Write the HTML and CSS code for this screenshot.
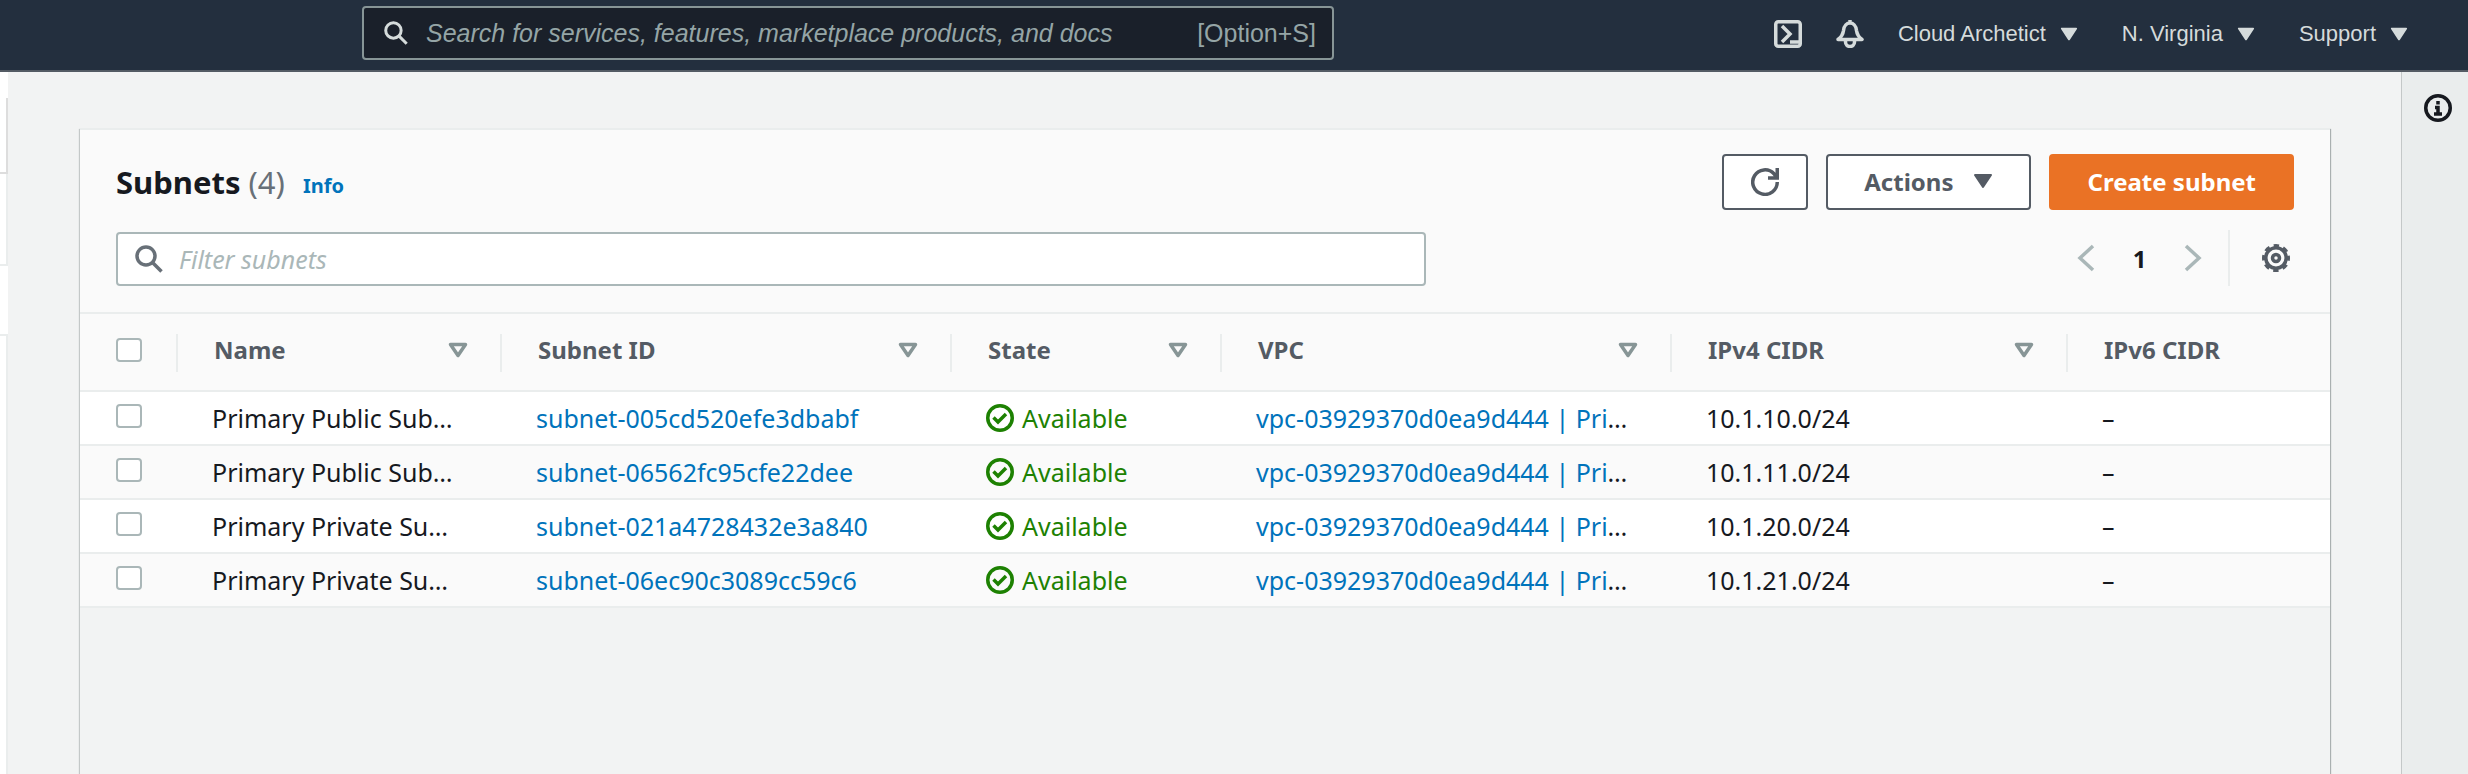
FILE: index.html
```html
<!DOCTYPE html>
<html lang="en">
<head>
<meta charset="utf-8">
<title>Subnets</title>
<link rel="stylesheet" href="styles.css">
</head>
<body>
<svg class="sprite" aria-hidden="true">
  <symbol id="search" viewBox="0 0 28 28"><circle cx="11" cy="11" r="9"/><path d="M17 17l9.500 9.500"/></symbol>
  <symbol id="down" viewBox="0 0 20 16"><path d="M2 2h16L10 14z" fill="currentColor" stroke-width="2" stroke-linejoin="round"/></symbol>
  <symbol id="sort" viewBox="0 0 20 16"><path d="M2.500 2.500h15L10 13.500z" stroke-linejoin="round"/></symbol>
  <symbol id="ok" viewBox="0 0 28 28"><circle cx="14" cy="14" r="12.250"/><path d="M7.500 13.500l4.500 4.500 8-8"/></symbol>
</svg>

<header class="topbar">
  <label class="global-search">
    <svg class="icon global-search-icon"><use href="#search"/></svg>
    <input type="search" aria-label="Search" placeholder="Search for services, features, marketplace products, and docs">
    <span class="shortcut">[Option+S]</span>
  </label>
  <nav class="topnav">
    <button class="nav-icon" aria-label="CloudShell">
      <svg class="icon" viewBox="0 0 28 28"><rect x="1.750" y="1.750" width="24.500" height="24.500" rx="2.500"/><path d="M8 6l8 8-8 8M16 22h9"/></svg>
    </button>
    <button class="nav-icon" aria-label="Notifications">
      <svg class="icon" viewBox="0 0 28 28"><path d="M14 0v3M2 19.500c4-3 5-5 5.500-9C8 5.500 11 3 14 3s6 2.500 6.500 7.500c.500 4 1.500 6 5.500 9zM9.500 20v2a4.500 4.500 0 0 0 9 0v-2" stroke-linejoin="round"/></svg>
    </button>
    <button class="nav-menu">Cloud Archetict<svg class="nav-caret"><use href="#down"/></svg></button>
    <button class="nav-menu">N. Virginia<svg class="nav-caret"><use href="#down"/></svg></button>
    <button class="nav-menu">Support<svg class="nav-caret"><use href="#down"/></svg></button>
  </nav>
</header>

<div class="shell">
  <aside class="side-edge">
    <div class="edge edge-top"></div>
    <div class="edge edge-tab"></div>
    <div class="edge edge-group"></div>
    <div class="edge edge-plain"></div>
    <div class="edge edge-rest"></div>
  </aside>

  <main class="content">
    <section class="panel">
      <div class="panel-head">
        <div class="title-row">
          <h1>Subnets <span class="count">(4)</span></h1>
          <a class="info" href="#">Info</a>
          <div class="actions">
            <button class="btn btn-refresh" aria-label="Refresh">
              <svg class="icon" viewBox="0 0 28 28"><path d="M26.250 14A12.250 12.250 0 1 1 23 5.800l2.500 3M26.250 0v10H17"/></svg>
            </button>
            <button class="btn">Actions<svg class="caret"><use href="#down"/></svg></button>
            <button class="btn btn-primary">Create subnet</button>
          </div>
        </div>
        <div class="filter-row">
          <label class="filter">
            <svg class="icon filter-icon"><use href="#search"/></svg>
            <input type="text" aria-label="Filter subnets" placeholder="Filter subnets">
          </label>
          <div class="pager">
            <button class="page-step" aria-label="Previous page"><svg class="chevron" viewBox="0 0 18 28"><path d="M16 2L3 14l13 12"/></svg></button>
            <button class="page-number">1</button>
            <button class="page-step" aria-label="Next page"><svg class="chevron" viewBox="0 0 18 28"><path d="M2 2l13 12L2 26"/></svg></button>
            <button class="settings" aria-label="Preferences">
              <svg class="icon" viewBox="0 0 28 28"><circle cx="14" cy="14" r="10.200"/><circle cx="14" cy="14" r="12.500" stroke-width="3" stroke-dasharray="5.400 4.417" stroke-dashoffset="2.700"/><circle cx="14" cy="14" r="3.500"/></svg>
            </button>
          </div>
        </div>
      </div>

      <table class="subnets">
        <colgroup><col class="c-check"><col class="c-name"><col class="c-wide"><col class="c-state"><col class="c-wide"><col class="c-cidr"><col></colgroup>
        <thead>
          <tr>
            <th><input type="checkbox" aria-label="Select all"></th>
            <th><div class="th">Name<svg class="sort"><use href="#sort"/></svg></div></th>
            <th><div class="th">Subnet ID<svg class="sort"><use href="#sort"/></svg></div></th>
            <th><div class="th">State<svg class="sort"><use href="#sort"/></svg></div></th>
            <th><div class="th">VPC<svg class="sort"><use href="#sort"/></svg></div></th>
            <th><div class="th">IPv4 CIDR<svg class="sort"><use href="#sort"/></svg></div></th>
            <th><div class="th">IPv6 CIDR</div></th>
          </tr>
        </thead>
        <tbody>
          <tr>
            <td><input type="checkbox" aria-label="Select subnet-005cd520efe3dbabf"></td>
            <td>Primary Public Sub…</td>
            <td><a href="#">subnet-005cd520efe3dbabf</a></td>
            <td><span class="state"><svg class="icon"><use href="#ok"/></svg>Available</span></td>
            <td><a href="#">vpc-03929370d0ea9d444 | Pri</a>…</td>
            <td>10.1.10.0/24</td>
            <td>–</td>
          </tr>
          <tr>
            <td><input type="checkbox" aria-label="Select subnet-06562fc95cfe22dee"></td>
            <td>Primary Public Sub…</td>
            <td><a href="#">subnet-06562fc95cfe22dee</a></td>
            <td><span class="state"><svg class="icon"><use href="#ok"/></svg>Available</span></td>
            <td><a href="#">vpc-03929370d0ea9d444 | Pri</a>…</td>
            <td>10.1.11.0/24</td>
            <td>–</td>
          </tr>
          <tr>
            <td><input type="checkbox" aria-label="Select subnet-021a4728432e3a840"></td>
            <td>Primary Private Su…</td>
            <td><a href="#">subnet-021a4728432e3a840</a></td>
            <td><span class="state"><svg class="icon"><use href="#ok"/></svg>Available</span></td>
            <td><a href="#">vpc-03929370d0ea9d444 | Pri</a>…</td>
            <td>10.1.20.0/24</td>
            <td>–</td>
          </tr>
          <tr>
            <td><input type="checkbox" aria-label="Select subnet-06ec90c3089cc59c6"></td>
            <td>Primary Private Su…</td>
            <td><a href="#">subnet-06ec90c3089cc59c6</a></td>
            <td><span class="state"><svg class="icon"><use href="#ok"/></svg>Available</span></td>
            <td><a href="#">vpc-03929370d0ea9d444 | Pri</a>…</td>
            <td>10.1.21.0/24</td>
            <td>–</td>
          </tr>
        </tbody>
      </table>
    </section>
  </main>

  <aside class="help-bar">
    <button class="help" aria-label="Open help panel">
      <svg class="icon" viewBox="0 0 28 28"><circle cx="14" cy="14" r="12.250"/><path d="M14 7v3.500M11 13.500h3v6M10 20h8"/></svg>
    </button>
  </aside>
</div>
</body>
</html>
```
FILE: styles.css
```css
* { box-sizing: border-box; }

body {
  margin: 0;
  min-height: 100vh;
  display: flex;
  flex-direction: column;
  background: #f2f3f3;
  color: #16191f;
  font-family: "Noto Sans", "Open Sans", sans-serif;
  font-size: 25px;
}

button, input { font: inherit; color: inherit; }
button { border: 0; padding: 0; background: none; display: flex; align-items: center; }
a { color: #0073bb; text-decoration: none; }

.sprite { display: none; }
svg { fill: none; stroke: currentColor; stroke-width: 3.5; display: block; }
.icon { width: 28px; height: 28px; flex: none; }

/* Top bar */
.topbar {
  display: flex;
  align-items: center;
  height: 72px;
  padding: 0 60px 4px 362px;
  background: #232f3e;
  border-bottom: 2px solid #545b64;
  font-family: "Liberation Sans", Arial, sans-serif;
}
.global-search {
  display: flex;
  align-items: center;
  flex: 0 1 972px;
  height: 54px;
  padding: 0 16px 0 20px;
  background: #1a202a;
  border: 2px solid #879596;
  border-radius: 4px;
  color: #95a5a6;
  font-size: 25px;
}
.global-search input {
  flex: 1;
  min-width: 0;
  padding: 0;
  border: 0;
  outline: 0;
  background: none;
}
.global-search input::placeholder { color: #95a5a6; font-style: italic; opacity: 1; }
.global-search-icon { width: 24px; height: 24px; margin-right: 18px; color: #d5dbdb; }
.topnav { display: flex; align-items: center; margin-left: auto; padding-top: 2px; color: #d5dbdb; font-size: 22px; }
.nav-icon { margin-right: 34px; }
.nav-menu { margin-right: 44px; }
.nav-menu:last-child { margin-right: 0; }
.nav-caret { width: 18px; height: 16px; margin-left: 14px; }

/* Page frame */
.shell { flex: 1; display: flex; }
.side-edge { width: 8px; display: flex; flex-direction: column; background: #fff; }
.edge { border: 0 solid #eaeded; }
.edge-top { height: 26px; }
.edge-tab { height: 76px; border-width: 0 2px 2px 0; border-color: #ddd; }
.edge-group { height: 92px; border-width: 0 2px 2px 0; }
.edge-plain { height: 70px; border-bottom-width: 2px; }
.edge-rest { flex: 1; border-right-width: 2px; }
.content { flex: 1; min-width: 0; display: flex; padding: 56px 71px 0 72px; }
.help-bar { width: 67px; padding: 22px 0 0 22px; background: #eaeded; border-left: 1px solid #c4c8c8; }
.help { color: #16191f; }

/* Panel */
.panel {
  flex: 1;
  min-width: 0;
  border-top: 2px solid #eaeded;
  box-shadow: 1px 1px 1px #aab0b0, -1px 1px 1px #c4c8c8;
}
.panel-head { padding: 24px 36px 26px; background: #fafafa; border-bottom: 2px solid #eaeded; }
.title-row { display: flex; align-items: center; }
h1 { margin: 0; font-size: 31px; line-height: 56px; font-weight: 700; }
.count { color: #687078; font-weight: 400; }
.info { margin-left: 18px; padding-top: 6px; font-size: 20px; font-weight: 700; }
.actions { display: flex; gap: 18px; margin-left: auto; }
.btn {
  height: 56px;
  padding: 0 36px 2px;
  border: 2px solid #545b64;
  border-radius: 4px;
  background: #fff;
  color: #545b64;
  font-size: 24px;
  font-weight: 700;
}
.btn-refresh { padding: 0 27px; }
.btn-primary { background: #ea7225; border-color: #ea7225; color: #fff; }
.caret { width: 20px; height: 18px; margin-left: 20px; }

.filter-row { display: flex; align-items: flex-end; justify-content: space-between; margin-top: 20px; }
.filter {
  display: flex;
  align-items: center;
  flex: 0 1 1310px;
  height: 54px;
  padding: 0 17px;
  background: #fff;
  border: 2px solid #aab7b8;
  border-radius: 4px;
}
.filter-icon { margin-right: 16px; color: #687078; }
.filter input { flex: 1; min-width: 0; padding: 0; border: 0; outline: 0; background: none; }
.filter input::placeholder { color: #aab7b8; font-style: italic; opacity: 1; }
.pager { display: flex; align-items: center; height: 56px; }
.page-step { color: #aab7b8; }
.chevron { width: 18px; height: 28px; }
.page-number { width: 89px; justify-content: center; font-size: 24px; font-weight: 700; }
.settings { height: 56px; margin-left: 26px; padding: 0 4px 0 32px; border-left: 2px solid #eaeded; color: #545b64; }

/* Table */
.subnets { width: 100%; table-layout: fixed; border-collapse: separate; border-spacing: 0; }
.c-check { width: 98px; }
.c-name { width: 324px; }
.c-wide { width: 450px; }
.c-state { width: 270px; }
.c-cidr { width: 396px; }
th {
  height: 78px;
  padding: 0 0 4px;
  background: linear-gradient(#eaeded, #eaeded) right 20px / 2px 38px no-repeat #fafafa;
  border-bottom: 2px solid #eaeded;
  color: #545b64;
  font-size: 24px;
  text-align: left;
}
th:last-child { background: #fafafa; }
.th { display: flex; align-items: center; justify-content: space-between; padding: 0 34px 0 36px; line-height: 38px; }
.sort { width: 20px; height: 16px; color: #879596; }
td {
  height: 54px;
  padding: 0 38px 0 34px;
  background: #fff;
  border-bottom: 2px solid #eaeded;
  white-space: nowrap;
  line-height: 36px;
}
tbody tr:nth-child(even) td { background: #fafafa; }
th:first-child, td:first-child { padding: 0 0 4px 36px; }
input[type="checkbox"] {
  appearance: none;
  display: block;
  width: 26px;
  height: 24px;
  margin: 0;
  background: #fff;
  border: 2px solid #aab7b8;
  border-radius: 4px;
}
.state { display: flex; align-items: center; gap: 8px; color: #1d8102; }
```
